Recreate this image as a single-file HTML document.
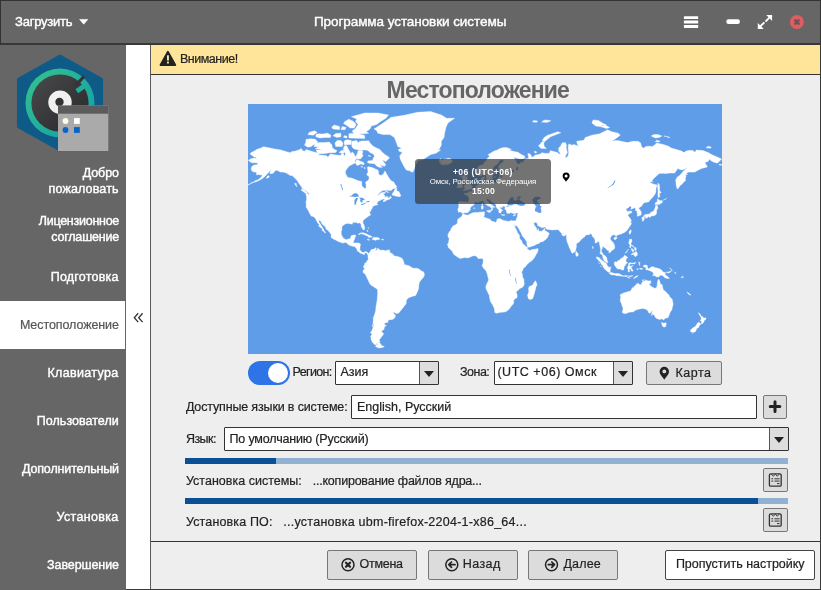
<!DOCTYPE html>
<html lang="ru"><head><meta charset="utf-8"><title>Программа установки системы</title>
<style>
html,body{margin:0;padding:0}
body{width:821px;height:590px;overflow:hidden;position:relative;background:#eee;font-family:'Liberation Sans',sans-serif;font-size:13px;color:#222}
.a{position:absolute;box-sizing:border-box}
.t{position:absolute;white-space:nowrap}
.btn{position:absolute;box-sizing:border-box;background:#dcdcdc;border:1px solid #777;border-radius:2px}
.fld{position:absolute;box-sizing:border-box;background:#fff;border:1px solid #333;border-radius:1px}
.dd{position:absolute;box-sizing:border-box;background:#ddd;border-left:1px solid #555;top:0;right:0;bottom:0;width:19px}
.dd:after{content:"";position:absolute;left:50%;top:50%;margin:-2px 0 0 -5px;border:5px solid transparent;border-top:6px solid #222;border-bottom:0}
.pb{position:absolute;height:6px;background:#91b1d2;left:185px;width:603px}
.pb i{position:absolute;left:0;top:0;bottom:0;background:#095096}

</style></head>
<body>
<!-- title bar -->
<div class="a" style="left:0;top:0;width:821px;height:45px;background:#666;border:1px solid #333;border-bottom:2px solid #383838"></div>
<svg class="a" style="left:78px;top:17px" width="12" height="10" viewBox="0 0 12 10"><path d="M1.6 2.4 L9.8 2.4 L5.7 7.2Z" fill="#fff" stroke="#fff" stroke-width="0.6" stroke-linejoin="round"/></svg>
<svg class="a" style="left:680px;top:12px" width="124" height="22" viewBox="680 12 124 22">
<g fill="#fff"><rect x="683.9" y="16.2" width="14.3" height="2.9" rx="0.6"/><rect x="683.9" y="20.6" width="14.3" height="2.9" rx="0.6"/><rect x="683.9" y="25" width="14.3" height="2.9" rx="0.6"/>
<rect x="726.3" y="19.3" width="13.6" height="4.6" rx="2.2"/>
<path d="M766.2 15 L772.1 15 L772.1 20.9 L769.82 18.62 L766.17 22.27 L764.83 20.93 L768.48 17.28Z M757.8 23 L757.8 28.9 L763.7 28.9 L761.42 26.62 L765.07 22.97 L763.73 21.63 L760.08 25.28Z"/></g>
<circle cx="796.9" cy="22" r="7" fill="#e05c60"/>
<path d="M795.3 20.4 L798.5 23.6 M798.5 20.4 L795.3 23.6" stroke="#6a5557" stroke-width="2.7" stroke-linecap="round"/>
</svg>
<!-- sidebar -->
<div class="a" style="left:0;top:45px;width:126px;height:545px;background:#666"></div>
<div class="a" style="left:0;top:301px;width:125px;height:48px;background:#fff"></div>
<div class="a" style="left:126px;top:45px;width:24px;height:545px;background:#fff"></div>
<!-- logo -->
<svg class="a" style="left:12px;top:50px" width="100" height="106" viewBox="12 50 100 106">
<defs><linearGradient id="gr" x1="0" y1="0" x2="1" y2="1"><stop offset="0" stop-color="#33c48d"/><stop offset="1" stop-color="#159aa8"/></linearGradient>
<linearGradient id="dk" x1="0" y1="0" x2="1" y2="1"><stop offset="0" stop-color="#4a4a4c"/><stop offset="1" stop-color="#28282a"/></linearGradient></defs>
<path d="M60 54.6 L102.8 78.6 L102.8 127.4 L60 151.4 L17.2 127.4 L17.2 78.6Z" fill="#0e5b88" stroke="#0e5b88" stroke-width="5" stroke-linejoin="round" transform="translate(60 103) scale(0.95) translate(-60 -103)"/>
<circle cx="60" cy="103" r="34.5" fill="url(#gr)"/>
<circle cx="60" cy="103" r="28.6" fill="url(#dk)"/>
<path d="M75.4 85.9 L84.1 76.2" stroke="#34343a" stroke-width="3.2" fill="none"/>
<path d="M76.8 91.2 L87.4 83.8" stroke="#1fae9b" stroke-width="4.8" fill="none"/>
<circle cx="60" cy="102.3" r="11.7" fill="#f0f0f0"/>
<circle cx="59.5" cy="102" r="4.2" fill="#333"/>
<rect x="58" y="105.500" width="50.300" height="45.500" fill="#aaa"/>
<rect x="58" y="105.500" width="50.300" height="8.200" fill="#5c5c5c"/>
<circle cx="65.500" cy="121" r="2.900" fill="#fffbe8"/><rect x="74" y="118.100" width="5.800" height="5.800" fill="#fff"/>
<circle cx="65.500" cy="130" r="2.900" fill="#0a64c8"/><rect x="74" y="127.100" width="5.800" height="5.800" fill="#0a64c8"/>
</svg>
<!-- collapse chevrons -->
<svg class="a" style="left:132px;top:311px" width="13" height="13" viewBox="132 311 13 13"><path d="M138.200 313.300 L134.300 317.700 L138.200 322.100 M142.600 313.300 L138.700 317.700 L142.600 322.100" fill="none" stroke="#333" stroke-width="1.300"/></svg>
<!-- content frame -->
<div class="a" style="left:150px;top:45px;width:671px;height:545px;border:1px solid #3a3a3a;border-left-color:#5a5a5a;border-top:0;border-bottom:1.4px solid #3a3a3a;background:#eee"></div>
<div class="a" style="left:126px;top:588.6px;width:30px;height:1.4px;background:#3a3a3a"></div>
<div class="a" style="left:151px;top:45px;width:669px;height:30px;background:#fee599;border-bottom:1px solid #333"></div>
<svg class="a" style="left:158px;top:49px" width="20" height="19" viewBox="158 49 20 19"><path d="M167.900 51.800 L175.300 65 L160.500 65Z" fill="#222" stroke="#222" stroke-width="1.800" stroke-linejoin="round"/><rect x="167" y="55.300" width="1.900" height="5.200" fill="#fee599"/><rect x="167" y="61.600" width="1.900" height="1.900" fill="#fee599"/></svg>
<div class="a" style="left:151px;top:541px;width:669px;height:1px;background:#333"></div>
<!-- map -->
<div class="a" style="left:248px;top:104px;width:474px;height:250px;background:#5f9de8;overflow:hidden"><svg width="474" height="250" viewBox="0 0 474 250" style="position:absolute;left:0;top:0;display:block"><path fill="#fff" stroke="#fff" stroke-width="0.4" stroke-linejoin="round" d="M0.4 56.3L3.1 54.7L6.2 54.0L9.0 54.9L7.6 53.3L6.2 52.9L2.1 50.1L2.9 48.7L6.4 47.1L8.6 45.4L12.4 44.2L15.7 42.7L21.6 43.9L26.9 45.1L32.9 45.9L36.2 47.1L39.5 48.0L42.1 48.7L44.1 47.5L46.7 47.3L50.7 45.9L53.3 44.6L54.6 46.8L57.3 47.3L57.9 45.6L61.2 46.6L66.5 48.2L70.5 48.7L71.8 50.1L69.8 51.0L75.8 51.3L79.1 52.0L79.7 53.6L81.1 51.7L82.4 49.9L86.3 50.8L90.3 51.3L92.9 51.3L93.6 49.4L95.6 50.1L96.2 52.4L97.6 49.7L96.2 48.0L95.2 46.1L95.6 43.7L96.9 41.4L98.9 41.9L100.2 44.9L101.5 47.1L102.8 49.7L104.2 48.0L106.1 49.7L106.8 52.2L108.1 52.2L109.5 49.0L110.1 46.6L114.1 46.6L115.0 48.0L114.1 49.7L115.0 51.7L112.8 54.7L110.8 54.9L108.8 54.5L106.8 56.9L107.5 58.7L105.5 59.7L102.6 61.2L100.9 62.3L98.2 65.8L97.2 68.1L98.0 70.5L99.8 73.6L103.5 74.0L106.1 75.1L110.1 76.8L113.7 77.4L113.8 81.5L115.4 83.6L117.1 84.7L118.2 83.3L118.0 80.0L117.4 78.3L120.7 75.9L121.3 73.0L118.7 70.7L120.0 68.1L119.4 63.3L120.0 62.7L123.3 63.3L125.3 64.0L127.3 65.0L129.9 66.0L130.6 68.1L130.4 70.1L132.6 71.4L135.2 70.5L136.5 67.5L137.2 67.3L139.2 71.0L141.1 74.0L143.1 76.8L145.8 78.1L147.1 80.6L148.8 82.4L147.7 84.2L145.1 84.7L143.1 86.5L139.2 86.3L134.5 86.5L132.6 88.1L130.6 90.0L128.6 92.2L130.6 91.0L133.9 88.6L137.2 88.2L137.4 88.9L135.2 90.1L136.5 91.0L136.8 93.2L138.5 93.7L141.1 94.2L142.5 92.0L143.4 93.7L141.8 95.1L138.5 96.2L135.9 97.9L134.9 97.1L137.2 94.9L135.9 95.1L133.9 95.4L131.9 96.6L129.9 97.5L128.9 99.3L129.1 100.5L129.9 100.3L130.0 100.8L129.1 101.1L128.1 101.1L126.6 101.6L124.6 102.6L124.5 104.0L123.3 105.3L122.7 104.5L123.2 105.9L122.1 108.1L121.6 107.5L121.5 104.8L121.2 106.7L121.6 108.4L122.7 111.0L121.1 111.8L119.4 113.0L117.8 114.2L115.7 115.7L114.9 117.6L115.0 119.1L116.1 121.2L116.7 123.5L116.5 125.5L115.4 125.9L114.3 124.4L113.1 122.2L113.1 120.3L111.4 118.8L109.7 119.3L108.1 118.2L106.1 118.4L104.2 118.5L104.6 120.1L102.8 120.0L100.9 119.4L98.2 119.4L96.9 120.3L94.9 121.5L93.7 123.2L94.0 124.8L93.3 127.5L93.2 129.9L94.0 132.0L95.5 134.3L96.9 135.1L98.2 135.7L100.2 135.1L102.2 134.7L102.8 133.2L103.2 131.8L105.5 131.1L107.5 131.1L107.7 132.0L106.8 133.9L106.4 135.7L105.8 136.7L105.2 138.7L106.1 139.0L108.8 138.9L110.8 139.0L112.5 140.1L112.1 142.2L112.0 144.2L111.7 145.6L112.8 147.0L114.1 148.3L115.4 148.6L117.0 147.8L118.0 147.6L119.6 148.6L120.3 149.7L120.0 150.4L119.0 149.7L118.0 148.5L116.7 149.3L116.3 150.5L115.4 150.6L114.7 149.9L113.0 149.4L112.0 149.0L110.4 147.4L109.2 147.0L109.1 145.6L107.5 143.5L106.7 142.6L104.8 142.3L102.2 141.6L100.5 140.7L98.2 138.6L96.9 138.5L94.9 139.1L92.3 138.3L90.3 137.5L87.7 136.1L85.4 135.0L83.7 133.9L82.9 132.6L83.3 131.1L82.4 128.9L81.7 128.5L79.7 126.1L77.9 124.9L77.8 123.2L76.4 122.0L75.1 121.0L73.8 119.5L72.9 117.3L70.8 116.1L70.9 118.1L72.5 120.3L73.8 122.5L75.1 124.6L76.2 126.8L77.8 128.7L77.1 129.1L75.8 127.5L74.2 126.4L74.2 124.6L72.5 123.5L70.5 122.0L71.5 121.0L70.2 119.5L69.2 118.1L68.2 116.1L67.6 114.8L65.9 112.8L63.2 112.1L61.9 109.8L61.2 108.5L60.6 107.0L58.9 104.3L58.1 102.9L58.3 100.3L57.9 98.7L58.6 95.4L58.6 92.9L57.7 89.6L59.9 90.0L60.6 91.5L60.9 89.8L59.9 88.6L57.9 86.8L54.6 85.1L53.3 82.4L50.7 79.1L49.4 76.8L46.7 74.0L44.1 71.4L42.1 71.4L40.1 70.1L37.7 68.7L34.8 68.1L32.2 68.1L29.6 66.4L26.9 66.4L26.3 68.3L24.3 69.5L21.9 69.7L22.3 67.1L24.3 65.6L22.0 66.4L21.0 68.1L19.6 69.5L18.6 70.5L16.3 73.0L13.7 74.9L11.1 76.5L8.4 77.6L6.7 78.1L4.7 78.7L7.1 76.8L9.7 75.9L12.4 74.0L13.7 72.4L14.4 70.9L12.4 71.0L10.4 70.5L8.4 70.9L8.7 69.1L7.8 68.1L5.8 68.1L3.8 66.8L3.1 64.8L3.8 62.7L5.1 61.4L7.8 60.8L9.7 60.6L9.7 58.9L7.8 58.7L3.8 58.7L2.5 58.0Z M475.8 56.3L478.6 54.7L481.6 54.0L484.4 54.9L483.1 53.3L481.6 52.9L477.5 50.1L478.3 48.7L481.9 47.1L484.0 45.4L487.8 44.2L491.1 42.7L497.1 43.9L502.3 45.1L508.3 45.9L511.6 47.1L514.9 48.0L517.5 48.7L519.5 47.5L522.1 47.3L526.1 45.9L528.7 44.6L530.1 46.8L532.7 47.3L533.4 45.6L536.7 46.6L542.0 48.2L545.9 48.7L547.2 50.1L545.3 51.0L551.2 51.3L554.5 52.0L555.2 53.6L556.5 51.7L557.8 49.9L561.8 50.8L565.7 51.3L568.4 51.3L569.0 49.4L571.0 50.1L571.7 52.4L573.0 49.7L571.7 48.0L570.6 46.1L571.0 43.7L572.3 41.4L574.3 41.9L575.6 44.9L576.9 47.1L578.3 49.7L579.6 48.0L581.6 49.7L582.2 52.2L583.6 52.2L584.9 49.0L585.5 46.6L589.5 46.6L590.4 48.0L589.5 49.7L590.4 51.7L588.2 54.7L586.2 54.9L584.2 54.5L582.2 56.9L582.9 58.7L580.9 59.7L578.0 61.2L576.3 62.3L573.6 65.8L572.6 68.1L573.4 70.5L575.2 73.6L578.9 74.0L581.6 75.1L585.5 76.8L589.1 77.4L589.2 81.5L590.8 83.6L592.5 84.7L593.6 83.3L593.5 80.0L592.8 78.3L596.1 75.9L596.8 73.0L594.1 70.7L595.4 68.1L594.8 63.3L595.4 62.7L598.7 63.3L600.7 64.0L602.7 65.0L605.3 66.0L606.0 68.1L605.9 70.1L608.0 71.4L610.6 70.5L611.9 67.5L612.6 67.3L614.6 71.0L616.6 74.0L618.5 76.8L621.2 78.1L622.5 80.6L624.2 82.4L623.2 84.2L620.5 84.7L618.5 86.5L614.6 86.3L610.0 86.5L608.0 88.1L606.0 90.0L604.0 92.2L606.0 91.0L609.3 88.6L612.6 88.2L612.9 88.9L610.6 90.1L611.9 91.0L612.2 93.2L613.9 93.7L616.6 94.2L617.9 92.0L618.8 93.7L617.2 95.1L613.9 96.2L611.3 97.9L610.4 97.1L612.6 94.9L611.3 95.1L609.3 95.4L607.3 96.6L605.3 97.5L604.3 99.3L604.6 100.5L605.3 100.3L605.4 100.8L604.6 101.1L603.5 101.1L602.0 101.6L600.1 102.6L599.9 104.0L598.7 105.3L598.1 104.5L598.6 105.9L597.6 108.1L597.0 107.5L596.9 104.8L596.6 106.7L597.0 108.4L598.1 111.0L596.5 111.8L594.8 113.0L593.2 114.2L591.1 115.7L590.3 117.6L590.4 119.1L591.5 121.2L592.1 123.5L591.9 125.5L590.8 125.9L589.8 124.4L588.6 122.2L588.6 120.3L586.9 118.8L585.1 119.3L583.6 118.2L581.6 118.4L579.6 118.5L580.0 120.1L578.3 120.0L576.3 119.4L573.6 119.4L572.3 120.3L570.3 121.5L569.2 123.2L569.4 124.8L568.8 127.5L568.6 129.9L569.4 132.0L570.9 134.3L572.3 135.1L573.6 135.7L575.6 135.1L577.6 134.7L578.3 133.2L578.7 131.8L580.9 131.1L582.9 131.1L583.2 132.0L582.2 133.9L581.8 135.7L581.2 136.7L580.6 138.7L581.6 139.0L584.2 138.9L586.2 139.0L587.9 140.1L587.5 142.2L587.4 144.2L587.1 145.6L588.2 147.0L589.5 148.3L590.8 148.6L592.4 147.8L593.5 147.6L595.0 148.6L595.7 149.7L595.4 150.4L594.4 149.7L593.5 148.5L592.1 149.3L591.7 150.5L590.8 150.6L590.2 149.9L588.4 149.4L587.4 149.0L585.8 147.4L584.6 147.0L584.5 145.6L582.9 143.5L582.1 142.6L580.3 142.3L577.6 141.6L575.9 140.7L573.6 138.6L572.3 138.5L570.3 139.1L567.7 138.3L565.7 137.5L563.1 136.1L560.8 135.0L559.1 133.9L558.3 132.6L558.7 131.1L557.8 128.9L557.1 128.5L555.2 126.1L553.3 124.9L553.2 123.2L551.9 122.0L550.5 121.0L549.2 119.5L548.3 117.3L546.2 116.1L546.3 118.1L547.9 120.3L549.2 122.5L550.5 124.6L551.6 126.8L553.2 128.7L552.5 129.1L551.2 127.5L549.6 126.4L549.6 124.6L547.9 123.5L545.9 122.0L547.0 121.0L545.7 119.5L544.6 118.1L543.7 116.1L543.0 114.8L541.3 112.8L538.7 112.1L537.3 109.8L536.7 108.5L536.0 107.0L534.3 104.3L533.5 102.9L533.8 100.3L533.4 98.7L534.0 95.4L534.0 92.9L533.1 89.6L535.3 90.0L536.0 91.5L536.3 89.8L535.3 88.6L533.4 86.8L530.1 85.1L528.7 82.4L526.1 79.1L524.8 76.8L522.1 74.0L519.5 71.4L517.5 71.4L515.5 70.1L513.2 68.7L510.3 68.1L507.6 68.1L505.0 66.4L502.3 66.4L501.7 68.3L499.7 69.5L497.3 69.7L497.7 67.1L499.7 65.6L497.4 66.4L496.4 68.1L495.1 69.5L494.0 70.5L491.8 73.0L489.1 74.9L486.5 76.5L483.8 77.6L482.1 78.1L480.1 78.7L482.5 76.8L485.2 75.9L487.8 74.0L489.1 72.4L489.8 70.9L487.8 71.0L485.8 70.5L483.8 70.9L484.1 69.1L483.2 68.1L481.2 68.1L479.2 66.8L478.6 64.8L479.2 62.7L480.5 61.4L483.2 60.8L485.2 60.6L485.2 58.9L483.2 58.7L479.2 58.7L477.9 58.0Z M126.0 25.0L135.2 19.0L143.1 13.3L156.3 11.3L169.5 8.3L182.7 7.6L193.3 11.0L198.6 14.3L206.5 14.3L199.9 19.0L197.9 23.5L196.6 29.2L196.0 33.4L193.3 37.3L193.3 41.2L191.3 44.9L188.7 45.1L192.6 46.1L188.0 49.2L182.7 50.6L178.8 53.1L174.8 55.8L170.2 56.5L168.2 59.7L166.9 62.9L165.6 67.1L164.3 68.3L161.6 66.8L158.3 66.0L156.3 62.9L154.4 59.3L152.4 55.4L151.7 52.0L154.4 48.5L151.1 47.3L150.4 45.4L153.7 44.2L149.7 42.4L148.4 38.6L146.4 33.4L141.8 30.6L135.2 30.6L129.9 29.2L128.6 26.4Z M141.4 54.0L137.8 57.6L133.2 55.4L132.6 54.2L135.9 58.2L137.8 60.8L136.5 62.3L131.9 60.4L134.5 63.3L131.2 63.3L128.6 61.9L126.6 59.7L121.3 59.3L119.4 58.4L120.0 56.9L124.6 56.5L125.3 54.2L126.6 52.0L125.3 50.1L122.0 48.5L120.0 46.6L118.0 46.1L114.1 46.1L111.4 46.1L108.8 45.4L106.1 44.9L104.2 43.2L103.5 39.9L104.2 37.3L108.8 36.6L110.1 39.1L111.4 37.6L115.4 36.8L119.4 38.6L122.0 39.1L124.6 41.7L127.9 43.7L131.9 45.4L133.9 48.0L137.2 50.8L140.5 52.7Z M69.2 48.0L72.5 49.7L77.1 49.4L81.1 48.7L83.7 48.7L87.7 48.5L89.0 46.6L86.3 45.4L84.4 43.7L83.7 40.4L81.1 38.1L77.1 38.6L71.8 38.6L67.2 39.1L65.9 42.4L70.5 42.7L67.2 44.6L74.5 45.4L67.9 46.1Z M56.6 41.2L59.9 43.2L63.2 42.4L66.5 39.9L69.8 37.9L67.2 35.2L62.6 34.7L57.9 35.5L57.9 37.9Z M67.9 32.8L71.8 33.9L77.1 33.6L82.4 33.4L83.0 31.2L79.7 29.2L74.5 30.1L70.5 29.8L67.9 30.6Z M87.7 42.4L94.3 42.4L94.9 39.1L92.9 36.6L89.0 36.6L87.0 39.1Z M96.2 40.7L102.8 40.4L103.5 36.6L98.9 35.8L96.2 37.1Z M100.9 33.9L116.7 34.4L116.7 31.5L110.1 29.8L104.8 29.2L100.9 29.8Z M89.0 33.4L92.9 32.8L92.9 29.2L87.7 29.5L85.0 31.7Z M120.7 29.2L115.4 29.8L106.1 29.5L104.2 27.0L107.5 24.4L110.1 20.5L107.5 17.4L108.8 14.9L103.5 12.7L116.7 9.0L129.9 9.0L140.5 11.0L137.8 14.3L132.6 17.4L128.6 20.5L123.3 22.0L122.0 25.0L118.0 27.8Z M106.1 24.1L108.1 20.5L105.5 17.4L100.9 15.2L96.9 17.4L95.6 19.6L99.5 22.0L102.2 24.1Z M91.0 48.5L95.6 49.4L96.2 47.5L93.6 46.3Z M108.1 60.4L109.5 61.4L112.8 60.0L115.4 60.8L116.5 59.7L114.7 58.0L111.4 56.9L110.1 55.6L108.1 56.5L107.5 58.7Z M59.9 30.6L65.2 31.2L69.2 28.4L66.5 26.7L61.2 28.4Z M85.0 25.0L91.6 25.5L91.6 22.6L86.3 21.1L83.7 22.9Z M92.9 25.5L96.9 25.8L98.2 23.5L94.3 22.6Z M144.1 91.0L148.4 92.2L152.1 92.7L152.8 91.2L151.7 89.5L151.1 87.7L149.1 87.0L148.4 86.0L149.1 84.0L147.1 85.1L145.8 87.7L144.4 89.5Z M59.4 89.6L57.3 89.1L55.3 87.7L52.9 85.8L54.0 85.2L56.6 86.5L58.6 88.1Z M49.1 82.9L47.4 81.1L46.7 79.3L48.3 79.6L48.4 81.5Z M18.3 74.4L21.2 73.2L21.0 71.6L19.3 72.2Z M137.4 92.5L140.5 93.0L139.8 93.7L137.8 93.2Z M137.2 87.2L140.5 88.1L140.7 88.4L137.8 87.7Z M110.2 130.5L112.1 129.1L114.1 128.7L116.1 128.9L118.0 129.8L120.0 130.8L122.4 131.8L124.4 132.9L123.3 133.3L120.0 133.3L120.4 132.3L118.7 131.8L116.7 130.8L114.3 130.1L113.0 129.6L111.4 130.6Z M124.1 135.4L125.6 133.3L127.7 133.4L129.9 133.6L132.0 135.1L130.6 135.5L128.6 135.7L127.7 136.4L126.2 135.7L124.6 135.8Z M119.0 135.5L120.7 135.3L121.7 136.0L120.4 136.2Z M133.6 135.3L135.7 135.4L135.5 136.0L133.6 136.0Z M119.0 126.8L119.6 125.9L119.9 127.1L119.5 127.8Z M119.9 123.5L120.7 123.9L120.4 124.6Z M140.6 146.0L141.9 145.9L141.8 146.8L140.6 146.8Z M4.7 78.7L2.5 79.8L0.5 80.9L-0.8 81.8L0.5 80.6L2.5 79.4L4.5 78.1Z M480.1 78.7L477.9 79.8L475.9 80.9L474.6 81.8L475.9 80.6L477.9 79.4L479.9 78.1Z M471.0 61.0L474.6 61.4L474.9 60.8L471.3 60.2Z M112.8 62.3L114.7 62.7L114.1 63.6Z M116.1 63.3L117.4 64.0L116.7 64.8Z M120.0 51.3L122.7 52.0L122.0 52.7Z M116.1 37.1L120.7 36.8L122.0 38.6L118.0 39.4Z M95.6 33.4L98.9 33.9L98.9 32.0L96.2 31.7Z M120.0 150.4L120.3 149.7L120.9 148.9L122.4 147.6L122.7 146.3L123.6 145.6L126.0 145.1L127.9 143.7L128.3 144.6L127.5 145.6L127.9 147.0L128.6 145.9L129.5 144.9L129.9 144.0L130.4 144.9L132.2 145.9L132.6 146.3L135.2 146.1L137.2 146.7L140.5 146.0L139.4 146.4L141.8 147.6L142.5 149.0L144.4 149.7L146.4 152.0L149.7 152.5L153.0 153.7L154.4 154.7L155.7 157.8L156.3 159.8L155.7 160.8L158.3 161.2L160.3 161.4L163.6 163.2L163.9 163.9L166.9 164.3L169.5 164.3L171.5 165.5L173.5 167.0L175.7 167.9L176.4 170.2L176.3 171.3L175.5 173.3L173.5 175.4L171.5 178.1L170.9 180.8L170.6 184.3L169.8 187.1L169.1 188.2L168.2 190.6L166.9 192.0L165.3 192.0L162.9 192.9L161.0 193.6L159.0 195.3L158.2 197.0L158.2 199.7L156.3 201.9L154.4 204.4L153.0 206.2L151.8 207.8L150.4 209.2L148.1 209.5L145.8 208.1L145.2 208.9L146.8 210.4L147.5 212.0L146.4 214.3L144.4 215.4L140.5 215.9L140.2 215.5L140.1 218.2L136.5 219.0L136.5 220.6L138.4 221.5L136.5 222.8L135.9 225.6L133.2 227.2L135.2 229.3L135.5 230.3L133.2 233.2L131.2 235.9L132.0 238.2L130.6 238.6L128.6 239.5L128.6 241.0L126.6 240.4L124.6 238.6L123.3 235.9L122.7 232.4L124.0 230.3L122.5 228.4L124.0 226.4L124.9 223.9L126.2 221.5L125.0 219.0L125.3 216.6L125.3 213.5L125.7 212.7L126.6 210.4L127.7 206.6L127.9 203.6L128.2 201.4L128.9 197.8L129.3 194.9L129.4 192.7L129.7 189.2L129.5 185.6L127.9 184.3L125.3 182.6L123.1 181.3L121.7 179.5L120.4 176.7L119.1 174.0L118.0 171.6L116.8 169.7L115.1 168.6L115.0 166.8L116.3 165.1L117.0 163.9L116.3 164.0L115.5 163.4L115.7 161.8L116.7 160.5L116.6 159.4L118.0 158.9L118.3 158.1L119.0 157.0L120.3 155.4L120.0 153.1L120.1 151.4L119.5 150.8Z M131.8 238.8L132.2 239.5L133.9 241.7L136.3 242.6L134.5 243.4L131.9 243.9L129.3 243.6L127.3 242.3L128.6 241.3L129.7 240.4L129.5 239.3Z M124.4 222.8L125.3 222.8L125.4 220.6L124.6 220.3Z M155.3 160.8L157.7 160.8L158.3 161.6L157.0 162.6L155.3 161.8Z M214.6 110.1L215.4 109.9L218.4 110.9L219.7 111.2L221.6 110.2L224.3 109.0L226.3 108.5L229.0 108.5L231.6 108.2L234.2 107.9L235.4 107.8L236.9 108.2L236.2 109.2L236.6 110.5L235.7 112.8L236.9 113.6L239.8 114.5L242.4 115.4L243.1 116.9L245.5 117.6L247.5 118.4L248.8 117.3L248.8 115.5L250.8 114.5L252.7 114.9L254.1 115.8L255.4 116.4L258.0 116.9L260.7 117.5L262.0 116.9L263.3 116.4L265.0 116.9L266.6 117.2L267.5 116.9L268.5 119.5L267.7 122.0L266.6 121.0L265.4 119.0L265.3 119.5L266.6 121.7L267.0 122.9L267.9 124.9L269.2 127.5L269.5 128.9L271.1 130.4L271.5 131.8L271.5 133.7L271.9 135.3L273.2 136.0L274.5 139.3L275.8 140.4L277.2 141.8L278.5 142.9L279.5 143.5L279.3 144.8L279.8 145.3L281.8 146.4L284.4 145.5L287.1 145.2L290.1 144.5L290.0 146.4L289.5 148.3L288.1 150.4L287.1 152.4L285.8 154.4L283.8 156.7L282.2 157.8L280.5 159.1L278.5 161.2L277.2 162.9L275.5 164.1L274.8 165.9L274.1 167.2L273.6 168.8L274.3 169.7L274.5 172.0L274.9 174.0L275.8 175.0L276.0 177.4L276.2 180.2L275.8 181.5L274.9 182.9L272.5 184.3L271.2 185.0L270.2 186.3L268.5 187.5L268.2 188.9L269.0 189.9L269.2 192.7L269.1 193.4L266.6 195.2L265.5 196.2L265.8 197.8L265.3 199.9L263.3 202.0L262.0 204.1L260.0 206.3L258.0 207.5L256.3 208.1L253.4 208.3L251.4 208.4L248.8 209.3L246.8 208.6L246.5 206.6L246.4 204.8L245.2 202.1L244.2 200.1L242.6 197.8L242.2 196.3L241.5 193.4L241.5 191.9L240.2 189.2L238.9 186.4L237.9 184.3L237.9 182.2L238.6 180.2L240.1 177.4L240.6 175.4L239.8 172.4L239.3 169.9L238.6 168.6L238.2 167.2L236.9 165.6L235.3 163.9L234.5 162.2L234.0 161.4L234.9 159.8L235.0 158.5L235.3 156.4L235.0 155.1L234.0 154.3L233.3 154.4L231.6 154.5L230.3 154.7L229.2 153.1L228.0 152.0L226.9 151.8L224.3 152.1L223.0 152.8L222.1 153.1L219.7 154.0L218.4 153.7L217.1 153.5L214.4 154.0L212.5 154.5L210.5 153.7L208.1 152.0L205.9 150.5L204.9 149.0L204.5 147.6L202.8 145.9L201.9 144.9L201.2 144.2L200.3 143.7L200.2 142.3L199.3 140.5L200.6 138.7L200.8 136.7L201.2 134.6L200.6 133.9L199.9 131.9L200.0 130.4L201.2 127.9L202.6 126.4L203.2 124.4L204.9 122.2L205.3 121.7L207.2 121.0L209.2 119.5L209.6 118.1L209.4 116.6L210.1 115.1L212.3 113.4L213.4 112.8L214.2 111.3Z M287.5 176.7L288.7 179.5L289.1 181.5L288.0 182.2L287.7 184.3L286.8 187.8L285.8 191.3L284.7 194.6L282.5 195.6L280.5 194.9L279.5 191.3L280.9 187.8L280.5 185.0L281.1 182.5L283.5 181.8L285.1 180.6L285.8 178.8Z M215.2 109.6L214.0 109.0L212.6 107.9L210.5 108.2L209.8 105.6L210.6 103.2L210.9 101.6L210.2 98.7L211.8 97.5L214.4 97.7L217.1 98.0L219.7 98.0L220.4 97.9L220.8 95.9L220.9 94.4L220.8 93.4L219.5 91.7L218.4 91.0L216.4 90.5L216.0 89.6L218.4 88.9L220.3 89.3L220.1 87.4L220.8 87.9L222.5 87.7L224.3 86.7L224.7 85.2L227.0 84.4L227.9 83.3L228.7 81.5L230.3 80.7L231.6 80.2L233.6 80.4L233.9 79.6L233.7 77.8L233.1 76.6L233.2 74.0L236.4 72.6L236.2 74.9L235.6 76.8L235.3 78.1L235.8 78.9L236.9 79.6L238.9 78.9L240.9 79.6L241.2 79.8L243.5 79.1L246.1 78.1L247.1 78.9L248.5 78.9L248.8 78.0L250.1 76.8L250.1 74.4L251.2 72.8L252.2 72.6L253.4 74.0L254.1 74.0L254.6 71.4L253.4 70.7L253.4 69.7L255.1 69.1L258.0 69.1L259.3 68.7L262.2 68.3L260.0 67.1L255.4 67.7L252.7 68.5L251.4 67.3L250.5 65.0L250.5 62.9L250.8 61.7L252.7 59.7L255.8 57.6L255.8 56.5L254.3 55.8L251.7 56.3L250.5 58.7L249.2 60.2L246.8 61.9L245.3 63.3L245.1 66.6L247.1 68.1L246.8 69.5L244.8 70.9L244.3 73.0L243.5 75.5L241.2 75.9L241.1 77.0L239.5 77.0L239.1 75.5L238.1 72.6L237.2 70.1L236.4 68.3L236.0 70.1L232.9 71.8L231.6 72.0L229.8 70.3L229.1 67.3L229.0 64.4L230.3 62.7L232.3 61.4L235.3 60.6L236.2 58.7L238.2 56.5L239.5 54.2L241.4 52.4L240.2 50.4L242.2 49.4L246.1 47.1L249.4 45.9L252.7 44.2L256.4 43.4L259.3 43.7L263.3 45.4L260.7 46.6L263.3 46.8L265.9 47.5L269.9 48.2L273.2 50.4L276.5 52.0L276.8 54.0L275.2 54.9L272.5 55.1L268.6 54.2L265.3 52.9L266.6 54.7L268.3 57.6L268.3 58.9L270.6 60.0L272.5 60.0L272.5 58.2L275.2 58.4L275.8 56.5L277.8 54.7L280.5 54.7L280.7 55.4L280.5 53.1L279.8 49.7L281.8 49.7L283.1 51.5L283.8 53.3L285.1 53.1L286.8 51.3L292.4 50.1L293.7 48.7L297.6 49.4L301.6 49.2L302.3 46.6L302.9 46.8L307.5 48.0L309.5 48.5L310.8 49.9L312.8 50.1L310.8 47.3L310.6 44.2L312.8 41.7L314.1 38.9L317.4 38.6L318.5 41.2L318.1 43.7L319.4 48.5L317.4 52.0L317.4 54.2L320.1 52.0L320.7 48.5L320.1 43.7L320.7 39.9L324.1 41.2L325.4 40.4L328.0 41.2L330.7 42.4L332.0 44.9L329.3 39.9L328.7 37.3L335.9 36.3L337.3 33.4L343.9 31.2L351.8 29.8L359.7 25.8L363.7 27.8L370.3 29.2L372.3 31.2L367.6 34.7L363.7 37.3L367.6 36.6L371.6 36.8L372.9 37.3L379.5 38.6L384.8 37.3L390.1 37.3L392.7 39.1L393.4 42.4L395.4 44.2L398.0 42.4L400.6 42.2L404.6 42.4L407.2 40.4L408.6 39.1L415.2 40.4L420.5 42.2L423.1 43.9L433.7 47.1L435.6 48.5L438.9 46.8L444.2 46.3L447.5 48.5L446.9 49.0L448.2 46.1L454.8 46.6L460.1 48.5L464.0 50.8L469.3 53.1L473.5 55.1L472.0 56.5L470.0 58.7L468.7 59.1L465.4 58.0L462.7 56.5L461.4 54.9L460.1 57.6L456.8 58.2L458.8 61.9L459.4 62.9L453.5 64.4L449.5 66.4L446.9 68.1L441.6 68.1L439.6 68.3L437.6 71.0L438.0 72.4L437.0 75.3L438.0 75.9L436.0 77.8L433.7 80.6L431.9 81.5L431.0 83.6L429.3 85.1L428.4 82.4L427.9 78.7L427.7 75.9L429.3 73.0L431.7 71.4L433.7 69.1L435.6 67.1L438.3 64.4L439.6 62.9L437.0 65.0L433.7 66.0L429.7 64.6L427.1 68.5L426.4 69.1L421.8 69.1L417.8 69.5L414.5 69.3L411.2 69.5L407.9 72.4L405.3 74.9L403.3 77.8L401.3 78.3L403.9 79.6L405.3 80.0L407.2 80.6L409.0 81.1L408.6 82.4L407.9 85.1L407.9 87.7L407.2 89.8L405.3 92.4L402.6 95.4L400.6 97.9L396.7 98.5L395.0 99.8L393.8 101.9L391.4 103.5L390.7 104.3L392.1 105.9L393.3 108.2L393.0 111.0L390.7 111.9L389.2 112.2L389.4 110.1L389.0 108.2L389.6 107.5L387.7 106.7L387.4 104.6L386.6 103.7L382.8 105.4L383.5 103.1L382.2 102.1L380.2 103.8L377.9 105.1L378.9 106.7L379.5 107.8L381.5 107.1L384.1 107.6L383.9 108.5L381.2 109.8L379.8 111.3L381.5 113.6L383.2 116.0L383.3 117.3L382.2 118.1L383.5 119.0L382.8 121.0L381.5 122.8L380.3 124.6L378.9 126.5L376.9 128.2L374.2 129.4L373.2 129.9L370.9 130.6L369.0 131.2L368.0 132.7L367.4 131.2L365.7 130.8L364.3 131.3L363.3 132.2L362.1 134.6L363.0 136.2L364.3 137.8L365.4 138.7L366.6 141.5L366.7 143.5L366.3 144.9L364.3 146.3L363.3 147.0L363.0 147.8L360.8 148.9L361.0 147.0L360.4 146.4L359.0 146.1L358.4 145.2L357.7 144.2L355.7 143.3L355.1 142.2L354.4 142.5L354.3 144.2L353.4 146.3L353.5 147.9L354.7 149.0L355.1 150.8L356.4 151.3L357.5 152.1L358.9 154.0L358.9 155.8L360.0 158.5L359.4 158.7L358.9 158.6L357.3 157.5L356.1 156.4L355.2 154.8L354.8 153.1L354.7 151.7L353.8 150.8L352.6 149.7L352.2 149.9L352.2 148.3L352.6 146.3L352.4 144.2L351.8 141.5L351.4 139.4L351.1 138.0L350.2 137.4L349.1 138.3L348.2 139.0L346.9 138.7L347.2 136.7L346.5 134.6L345.2 133.2L344.3 131.9L343.6 129.9L342.5 129.5L341.9 130.4L339.9 130.8L338.6 130.9L337.3 131.2L337.0 132.2L336.3 133.3L334.6 134.1L333.3 135.5L332.4 136.4L331.1 137.9L329.6 138.9L328.3 139.7L328.4 142.7L327.9 144.9L327.7 146.6L326.7 147.9L325.6 148.5L324.7 149.5L323.4 148.3L323.0 147.0L321.8 144.5L321.1 143.0L320.4 140.8L319.8 139.4L319.0 137.4L318.5 134.6L318.4 132.5L318.4 131.3L318.1 130.1L317.4 131.5L316.1 132.0L314.8 131.8L313.5 129.9L315.1 129.1L313.5 129.2L312.4 127.9L310.8 126.4L310.2 125.5L307.5 125.8L304.2 125.9L302.3 125.7L300.3 125.5L298.0 124.9L297.6 123.2L296.7 123.1L295.0 123.6L293.7 123.8L291.7 122.5L289.7 121.7L289.5 120.3L288.4 118.5L287.1 118.2L285.8 119.1L286.0 120.3L286.7 121.7L287.7 122.9L288.5 123.9L288.7 125.4L289.5 126.4L290.4 124.6L290.5 126.7L291.7 127.2L293.7 127.2L295.4 125.7L296.7 124.2L296.8 126.4L299.6 128.1L301.3 129.6L300.0 132.5L298.7 134.6L297.0 136.0L295.0 137.4L292.4 138.0L291.3 139.3L288.4 140.3L286.4 141.5L283.8 142.3L281.8 143.1L279.8 143.3L279.4 142.2L278.9 140.1L278.8 138.0L277.6 136.0L276.2 133.9L274.5 132.2L274.0 131.1L273.2 128.9L271.9 127.1L271.0 124.9L269.2 122.5L268.3 121.6L268.6 119.5L267.7 122.0L265.4 119.0L265.0 116.9L267.5 116.9L268.6 114.6L269.2 113.0L269.6 110.5L270.2 108.9L268.6 108.9L267.3 109.5L265.3 109.6L262.8 108.5L261.3 109.5L259.3 108.7L258.4 108.2L258.3 105.9L257.8 106.1L257.0 104.6L257.0 103.5L258.7 103.1L260.7 102.9L260.7 101.9L262.0 101.6L264.0 101.6L265.9 100.3L268.6 100.3L270.6 101.5L272.5 101.9L275.2 101.9L277.2 101.0L277.2 99.5L276.5 98.7L274.8 97.7L272.5 96.4L271.6 95.4L271.2 94.9L272.5 93.7L272.9 92.4L273.9 91.7L271.9 92.0L270.6 92.5L268.6 93.4L268.6 94.6L270.6 94.9L269.1 95.4L267.5 96.4L266.6 96.2L265.3 94.7L266.7 93.6L264.6 93.2L263.0 92.9L261.6 94.9L260.3 97.1L259.3 98.4L258.7 99.5L259.5 101.0L260.7 101.6L259.3 101.9L258.0 102.6L257.0 103.4L256.7 102.6L256.6 102.3L254.7 102.1L254.5 103.4L253.4 103.5L252.6 102.7L252.2 103.8L252.7 104.8L253.4 105.9L254.1 106.4L253.7 106.8L254.1 107.1L253.0 107.5L253.0 109.0L252.1 109.0L251.0 108.5L250.5 107.0L251.0 106.4L252.7 106.7L251.0 106.1L250.1 105.4L249.4 104.6L248.8 103.8L248.0 102.7L248.1 101.1L247.5 100.0L246.1 99.2L244.0 97.9L242.4 96.7L241.5 95.1L240.6 95.7L240.3 94.6L240.6 94.2L238.6 94.7L238.7 96.2L239.0 97.1L240.2 97.7L241.1 99.7L243.6 100.5L243.5 101.3L244.8 101.8L246.1 102.6L246.8 103.4L246.7 103.8L245.1 102.9L244.3 104.0L244.9 105.1L244.2 106.2L243.5 106.8L243.0 106.7L243.2 105.4L243.8 104.6L243.0 103.5L241.9 102.6L241.1 102.3L239.5 101.6L238.5 100.8L236.9 99.7L236.2 98.7L236.0 97.9L235.3 96.9L234.1 96.4L232.9 97.2L232.0 97.5L230.3 98.5L229.4 98.2L227.6 97.9L226.5 98.5L226.5 99.7L225.3 101.3L223.4 102.4L222.0 104.3L222.6 105.6L221.7 106.2L221.2 107.3L219.6 108.7L216.6 108.7Z M214.8 86.7L217.7 86.3L221.0 85.6L224.2 84.7L223.4 84.2L224.6 82.0L222.8 81.5L222.5 80.4L220.8 78.5L220.3 76.8L218.7 75.9L219.7 72.8L217.1 72.8L218.3 70.9L215.8 70.9L214.2 73.0L215.1 75.9L216.0 76.6L215.6 78.1L217.9 78.0L218.4 80.0L218.3 80.9L216.4 80.9L216.8 82.4L215.5 83.6L218.0 84.4L216.7 85.1Z M214.4 82.9L211.8 84.0L208.9 83.6L209.8 81.1L209.2 79.3L211.4 78.7L211.8 77.4L214.2 77.4L215.0 78.7L214.2 80.6Z M192.4 60.2L196.0 60.8L199.9 60.4L203.2 58.9L204.4 56.9L202.8 54.9L200.6 54.2L197.9 55.1L195.3 55.4L194.0 56.5L192.6 54.5L190.7 56.3L193.3 57.6L190.7 57.8L193.3 59.1Z M284.4 17.7L288.4 18.4L289.7 17.1L285.8 16.5Z M293.7 18.1L299.0 18.4L302.9 16.8L297.6 15.9L295.0 16.8Z M290.4 41.7L293.0 44.4L296.3 44.4L298.3 44.6L296.3 42.4L295.7 39.9L296.3 37.9L293.7 37.9L292.4 39.9Z M294.3 37.3L297.0 37.6L299.0 35.5L302.9 32.6L308.2 30.6L312.8 28.7L309.5 27.8L304.2 29.8L299.6 31.2L296.3 33.4L295.0 35.2Z M286.1 47.8L287.7 49.2L288.8 48.0L287.3 47.3Z M347.8 22.0L351.8 22.6L355.1 21.1L358.4 21.1L354.4 19.0L350.5 16.5L345.2 15.9L343.9 19.0Z M352.4 22.6L358.4 24.4L361.7 23.5L357.1 21.1Z M403.3 32.0L407.2 33.9L411.2 33.4L413.9 32.0L409.9 30.6L405.9 30.6Z M415.8 32.0L421.1 33.1L421.8 33.9L417.8 32.3Z M407.2 37.6L411.2 38.1L411.9 37.1L408.6 36.3Z M458.1 43.7L462.1 44.2L463.4 43.2L460.1 42.2Z M409.9 79.1L411.2 80.6L411.6 83.3L411.6 86.8L413.2 88.6L411.2 89.5L411.9 92.4L410.6 93.7L409.9 92.0L410.0 88.6L409.9 85.1L409.5 82.4L409.9 80.6Z M407.2 101.1L408.8 100.6L411.5 100.3L414.5 98.2L414.1 96.6L411.9 96.7L409.6 94.7L409.2 97.9L407.6 98.4L407.2 99.8Z M409.2 101.3L409.9 104.3L408.6 106.2L408.6 108.2L408.3 110.2L407.0 111.3L405.7 111.8L403.3 111.9L403.0 112.4L401.7 113.6L400.6 112.4L398.0 112.4L395.4 112.8L395.2 112.2L397.3 110.5L400.0 110.2L402.0 109.8L403.0 107.9L403.9 108.2L405.9 106.7L407.2 103.5L407.5 101.9Z M397.1 113.6L398.3 114.3L399.7 113.6L400.1 112.5L398.7 112.4L397.6 112.8Z M394.0 113.6L395.4 113.0L396.6 113.9L396.0 115.8L395.1 117.3L394.3 116.9L394.4 115.1L393.6 114.3Z M382.8 125.8L383.3 126.8L382.7 128.9L381.9 130.4L381.0 128.9L381.4 127.1Z M365.9 134.1L367.0 133.2L368.8 133.2L369.0 133.9L368.0 135.3L367.0 135.7L365.9 135.1Z M381.5 135.3L383.7 135.3L383.9 137.4L383.0 139.0L383.0 141.1L384.8 141.5L386.1 142.9L385.5 143.3L384.1 141.8L382.2 141.9L381.8 140.8L381.1 140.1L380.7 138.5L381.4 136.9Z M383.5 151.0L383.7 149.7L385.5 148.9L386.8 148.6L388.1 147.2L389.3 149.0L389.3 151.0L388.8 152.0L388.1 151.0L387.8 152.8L386.4 152.0L385.9 150.4L384.8 150.4Z M386.5 143.5L387.8 143.5L388.4 145.3L387.4 146.7L387.2 145.9L386.6 144.9Z M384.0 146.3L385.2 145.7L385.2 147.9L384.3 147.6L384.7 147.0Z M383.5 144.4L384.8 144.9L384.3 146.1L383.5 146.3Z M381.4 142.3L382.6 142.3L382.8 143.5L382.2 144.0Z M377.1 149.1L378.2 147.9L379.5 146.4L380.4 145.1L379.9 146.3L378.9 147.9L377.7 148.9Z M385.3 147.0L386.1 145.3L386.1 146.6L385.6 147.5Z M366.3 158.5L367.2 157.8L369.2 158.2L369.5 156.8L371.6 156.2L372.9 154.4L374.9 153.7L376.6 151.2L377.8 152.0L379.8 153.5L378.5 154.7L377.8 156.4L378.2 157.5L379.5 159.1L378.1 159.4L377.5 161.2L376.2 162.5L376.0 164.5L375.6 165.9L373.8 166.0L372.3 164.9L370.3 165.1L369.0 164.5L367.9 162.9L366.6 161.2L366.3 159.8Z M348.2 152.9L351.1 153.5L352.7 155.4L354.8 157.1L356.4 158.1L358.4 159.4L359.3 161.6L360.4 162.9L362.3 164.5L362.1 168.3L360.4 168.3L357.7 166.1L355.7 163.9L354.8 161.7L353.1 159.8L352.4 158.1L350.5 156.4L348.5 154.1Z M361.3 169.7L362.3 168.4L363.7 168.6L365.7 169.3L368.3 169.8L369.0 169.3L371.2 169.8L373.6 171.0L373.4 172.2L371.6 171.7L369.0 171.7L366.3 170.9L364.3 170.9L362.7 170.5Z M373.6 171.6L375.2 171.6L374.5 172.4Z M375.6 171.7L376.5 171.7L376.2 172.5L375.4 172.4Z M376.6 171.8L378.2 171.6L379.8 172.0L378.9 172.5L376.9 172.6Z M380.6 171.8L382.2 172.0L384.7 171.6L384.5 172.1L382.8 172.5L380.8 172.4Z M379.5 173.2L381.2 173.6L381.9 174.3L380.2 173.9Z M385.5 174.4L386.8 172.9L388.1 172.1L390.3 171.8L389.4 172.6L387.4 173.7L386.1 174.4Z M380.6 159.4L381.9 158.7L384.1 159.1L386.8 158.7L387.7 158.3L386.8 159.9L384.8 159.8L382.2 159.8L381.1 161.6L382.2 162.2L385.2 161.6L384.5 162.1L383.1 163.2L384.1 165.2L385.1 166.5L384.1 167.6L383.2 166.5L382.2 164.5L381.5 164.5L381.4 167.9L380.2 167.9L380.2 165.2L379.4 164.3L380.2 161.8L380.6 160.5Z M390.7 157.8L391.4 158.5L392.3 158.5L391.4 159.8L391.8 161.6L391.1 160.9L390.9 159.1Z M391.4 164.5L393.4 164.3L395.1 165.1L393.8 165.2L392.1 165.2Z M388.8 164.8L390.1 164.7L390.3 165.5L389.0 165.6Z M395.4 161.6L397.3 161.0L399.3 161.6L399.6 163.9L400.6 164.9L402.6 163.4L404.6 162.6L407.2 163.7L409.2 164.1L411.9 165.1L413.9 166.3L414.9 167.9L417.2 168.6L417.6 169.7L416.5 169.7L417.8 171.3L419.8 172.6L421.5 174.4L419.8 174.4L417.2 174.0L415.2 172.0L413.2 170.9L411.9 171.7L410.6 172.9L408.6 172.9L406.6 171.6L404.6 171.8L405.7 169.9L404.6 167.9L402.0 166.7L399.3 165.7L398.0 165.9L397.7 164.5L399.1 163.6L397.1 163.4L395.4 162.4Z M418.2 168.2L420.5 167.9L422.4 167.2L423.5 166.1L423.1 167.2L421.8 168.6L419.8 169.0Z M421.5 164.0L423.1 164.9L424.4 166.5L424.0 165.9L422.4 164.4Z M426.7 167.9L428.1 169.3L427.7 169.8L426.8 168.8Z M433.0 173.0L434.7 173.7L434.1 173.9L433.1 173.5Z M434.6 171.8L435.4 173.3L435.0 173.3L434.5 172.2Z M327.9 147.4L329.1 148.3L330.4 150.4L330.0 151.8L328.7 152.4L327.9 151.3L327.7 149.4Z M372.3 190.6L373.2 190.3L375.6 188.9L377.5 188.6L379.5 187.8L382.2 187.2L383.7 185.3L384.1 183.6L385.6 184.2L385.9 182.6L387.4 181.5L388.8 179.7L390.7 179.5L391.8 180.7L393.4 180.7L393.6 179.1L394.8 177.4L396.0 177.0L397.5 177.0L397.3 175.8L399.3 176.7L401.0 177.0L402.9 176.7L402.9 178.4L402.0 178.8L401.3 180.6L402.6 181.9L404.6 183.2L406.6 184.3L408.3 184.0L409.2 181.5L409.4 178.8L409.8 176.7L410.6 175.1L411.9 177.4L412.3 179.9L414.2 180.7L414.5 182.9L415.4 186.1L417.8 187.8L419.1 189.2L421.1 191.3L421.8 193.0L424.2 195.3L424.7 197.8L425.2 200.2L424.4 202.9L423.8 205.9L422.2 208.0L421.5 210.0L420.5 212.7L419.8 213.8L417.2 214.3L415.6 215.9L413.9 214.8L411.9 215.5L409.2 214.8L407.2 213.2L406.6 211.2L404.9 210.6L405.3 209.3L404.3 210.0L403.3 210.0L404.3 207.4L404.3 206.0L403.3 207.7L402.0 209.3L400.9 208.9L399.6 206.3L397.3 205.1L395.4 204.4L392.7 204.7L389.4 205.6L386.8 206.6L385.5 208.0L382.8 208.0L380.2 208.6L378.2 209.6L376.2 209.6L374.2 208.6L374.6 206.6L375.2 204.8L374.2 202.1L373.6 199.9L372.3 197.0L372.3 194.9L372.9 193.4L372.3 192.0Z M413.5 218.5L415.8 219.2L418.1 218.7L418.2 220.6L417.6 222.6L415.8 223.2L414.5 221.9L413.9 220.3Z M402.8 210.9L404.6 210.9L403.9 211.3Z M394.3 175.9L396.0 175.8L395.4 176.6L394.4 176.5Z M402.5 179.3L403.2 179.3L402.9 179.9Z M450.4 208.7L452.2 210.1L453.2 212.4L454.5 212.3L454.8 213.7L456.8 214.1L458.1 213.8L457.4 215.9L456.1 216.6L455.8 218.2L453.9 220.0L453.2 219.5L453.7 217.8L452.2 216.5L453.1 215.5L453.1 213.5L451.5 210.9Z M450.4 218.2L452.5 219.3L452.4 220.6L450.8 222.4L450.6 223.7L448.6 224.4L447.9 227.1L446.2 228.3L444.6 228.3L442.2 227.2L442.9 225.6L444.9 223.9L447.5 222.3L448.8 220.3L449.8 218.7Z M443.8 228.8L444.5 228.8L444.2 229.4Z M438.9 187.9L440.9 189.2L442.9 191.0L442.2 191.2L440.3 189.9Z M265.0 111.3L265.9 110.9L267.9 110.4L267.3 111.3L265.9 111.9Z M253.4 110.5L255.4 110.7L257.1 111.0L255.4 111.5L253.5 111.0Z M238.7 106.7L240.2 106.4L243.0 106.2L242.3 108.2L241.2 108.4L238.9 107.3Z M233.2 102.1L234.5 101.6L235.3 102.7L235.0 104.8L233.6 105.3L233.5 103.5Z M233.7 99.5L234.8 98.7L234.9 100.3L234.5 101.3L233.9 100.5Z M225.5 104.2L226.5 103.7L226.9 104.2L226.3 104.6Z M253.0 105.3L254.2 105.7L254.7 106.7L253.8 105.9Z M259.1 109.3L259.6 109.2L259.3 109.9Z M256.6 104.8L257.4 104.6L257.1 105.1Z M246.3 73.4L247.2 72.2L247.5 73.0L246.5 74.0Z M244.0 75.3L244.8 73.4L244.7 74.4Z M237.2 77.2L238.5 77.8L239.0 76.5L238.6 75.7L237.3 76.3Z M235.3 77.2L236.5 77.6L236.5 76.8L235.6 76.6Z M251.3 71.4L252.7 71.4L252.7 70.9L251.4 70.9Z M251.7 70.5L252.7 70.5L252.3 69.9Z M212.9 72.4L214.0 71.2L213.8 72.2L212.7 73.6Z M415.2 96.2L417.2 95.1L418.5 94.6L416.5 95.4Z M361.3 162.9L363.0 163.2L363.0 164.5L362.1 163.9Z M350.7 158.6L351.5 159.5L351.1 159.5Z M352.7 161.8L353.4 162.8L353.0 162.8Z M344.8 142.2L345.2 143.5L344.9 144.8L344.5 143.5Z M438.3 69.9L439.6 70.5L438.9 71.0Z M403.7 77.8L404.9 77.6L404.3 78.3Z"/><path fill="#5f9de8" d="M100.9 92.5L103.5 91.5L105.5 89.8L108.1 89.1L110.4 90.7L110.8 92.7L108.8 92.7L106.8 92.9L104.2 92.4Z M106.4 100.8L108.1 100.5L108.4 97.9L109.5 95.4L110.1 94.1L108.1 94.1L106.4 96.2L106.5 98.7Z M110.8 93.7L114.7 93.7L116.7 95.4L116.5 96.2L114.7 95.9L114.5 98.2L113.4 98.7L112.1 97.1L112.4 95.1Z M112.2 100.8L114.1 101.1L116.7 100.0L118.2 99.0L116.1 99.3L113.4 100.2Z M117.0 98.2L120.0 98.2L121.7 97.7L121.3 96.7L119.4 97.2Z M92.3 80.0L94.3 86.1L95.2 85.8L94.0 82.7L93.2 79.8Z M261.1 165.1L261.7 166.5L261.6 168.6L263.0 171.3L263.6 172.2L262.6 171.6L261.2 169.0L260.9 166.5Z M267.3 173.3L268.1 175.4L268.3 178.1L268.8 179.9L268.1 179.5L267.5 176.7L267.1 174.7Z M285.1 94.4L287.1 92.9L289.7 92.4L292.4 93.2L292.4 95.1L290.1 95.4L289.7 96.2L288.8 96.6L289.7 98.4L291.7 99.5L292.1 100.8L292.1 101.9L293.7 102.3L292.6 104.3L293.4 106.7L293.4 108.4L291.0 108.9L288.8 107.8L287.1 107.3L286.9 106.1L287.6 103.2L288.8 103.1L287.7 101.9L286.4 100.3L285.1 98.7L285.1 97.4L284.2 96.2Z M359.3 84.2L361.0 83.6L363.7 81.8L365.7 80.6L367.0 77.8L367.4 76.3L366.3 76.8L365.0 79.6L363.0 81.5L360.4 83.3Z M263.2 68.1L264.0 66.2L265.3 65.6L265.9 67.1L265.3 67.9L264.0 68.3Z M267.9 66.0L268.8 62.9L269.9 62.9L270.3 65.4L269.2 66.2Z"/></svg></div>
<div class="a" style="left:415.2px;top:158.7px;width:135.6px;height:45px;border-radius:3.5px;background:rgba(52,52,52,0.69)"></div>
<svg class="a" style="left:561px;top:171px" width="10" height="12" viewBox="561 171 10 12"><path d="M566 181.800 C564.800 179.800 562.600 178.300 562.600 176.100 A3.500 3.500 0 0 1 569.600 176.100 C569.600 178.300 567.200 179.800 566 181.800Z" fill="#000"/><circle cx="566.100" cy="176" r="1.500" fill="#fff"/></svg>
<!-- toggle -->
<div class="a" style="left:248px;top:361px;width:42px;height:24px;border-radius:12px;background:#2f74e6"></div>
<div class="a" style="left:267.800px;top:362.700px;width:20.600px;height:20.600px;border-radius:11px;background:#fff"></div>
<!-- region combo -->
<div class="fld" style="left:335px;top:361px;width:104px;height:24px"><div class="dd"></div></div>
<div class="fld" style="left:494px;top:361px;width:139px;height:24px"><div class="dd"></div></div>
<div class="btn" style="left:646px;top:361px;width:76px;height:24px"></div>
<svg class="a" style="left:658px;top:365px" width="13" height="16" viewBox="658 365 13 16"><path d="M664.300 379.800 C662.800 376.800 659.600 374.600 659.600 371.500 A4.700 4.700 0 0 1 669 371.500 C669 374.600 665.800 376.800 664.300 379.800Z" fill="#222"/><circle cx="664.300" cy="371.400" r="1.900" fill="#ddd"/></svg>
<div class="fld" style="left:351px;top:395px;width:406px;height:24px"></div>
<div class="btn" style="left:763px;top:395px;width:24px;height:24px"></div>
<svg class="a" style="left:767px;top:399px" width="16" height="16" viewBox="767 399 16 16"><path d="M775 401.8 V411.4 M770.2 406.6 H779.8" stroke="#222" stroke-width="3" stroke-linecap="round"/></svg>
<div class="fld" style="left:224px;top:427px;width:565px;height:24px"><div class="dd"></div></div>
<div class="pb" style="top:458px"><i style="width:91px"></i></div>
<div class="pb" style="top:498px"><i style="width:573px"></i></div>
<div class="btn" style="left:763px;top:468px;width:25px;height:24px"></div>
<div class="btn" style="left:763px;top:508px;width:25px;height:24px"></div>
<svg class="a" style="left:767px;top:471px" width="17" height="18" viewBox="767 471 17 18"><g fill="none" stroke="#333"><rect x="769.400" y="473.800" width="11.800" height="12.400" rx="1.300" stroke-width="1.300"/><path d="M771.4 474.2 L773.3 476.3 L775.3 474.2 L777.3 476.3 L779.2 474.2" stroke-width="0.9"/><path d="M771.300 478.800 H773.200 M774.400 478.800 H779.600 M771.300 481.100 H773.200 M774.400 481.100 H779.600 M777 483.600 H779.600" stroke-width="1"/></g></svg>
<svg class="a" style="left:767px;top:511px" width="17" height="18" viewBox="767 471 17 18"><g fill="none" stroke="#333"><rect x="769.400" y="473.800" width="11.800" height="12.400" rx="1.300" stroke-width="1.300"/><path d="M771.4 474.2 L773.3 476.3 L775.3 474.2 L777.3 476.3 L779.2 474.2" stroke-width="0.9"/><path d="M771.300 478.800 H773.200 M774.400 478.800 H779.600 M771.300 481.100 H773.200 M774.400 481.100 H779.600 M777 483.600 H779.600" stroke-width="1"/></g></svg>
<div class="btn" style="left:327px;top:550px;width:90px;height:30px"></div>
<div class="btn" style="left:428px;top:550px;width:90px;height:30px"></div>
<div class="btn" style="left:528px;top:550px;width:90px;height:30px"></div>
<svg class="a" style="left:340px;top:557px" width="220" height="16" viewBox="340 557 220 16"><g fill="none" stroke="#222" stroke-width="1.500"><circle cx="348" cy="564.700" r="6"/><circle cx="451.800" cy="564.700" r="6"/><circle cx="551.500" cy="564.700" r="6"/></g>
<path d="M346 562.700 L350 566.700 M350 562.700 L346 566.700" stroke="#222" stroke-width="2.200" stroke-linecap="round"/>
<path d="M455 564.700 H449.500 M451.500 562 L448.800 564.700 L451.500 567.400" stroke="#222" stroke-width="1.700" fill="none" stroke-linecap="round" stroke-linejoin="round"/>
<path d="M548.300 564.700 H553.800 M551.800 562 L554.500 564.700 L551.800 567.400" stroke="#222" stroke-width="1.700" fill="none" stroke-linecap="round" stroke-linejoin="round"/>
</svg>
<div class="btn" style="left:665px;top:550px;width:150px;height:30px;background:#fff;border-color:#444"></div>
<div id="txt" style="position:absolute;left:0;top:0;width:821px;height:590px;will-change:transform">
<div class="t" style="top:14.40px;font-size:13px;line-height:16px;color:#fff;letter-spacing:-0.229px;left:15.10px;-webkit-text-stroke:0.4px #fff;">Загрузить</div>
<div class="t" style="top:14.22px;font-size:13.5px;line-height:16px;color:#fff;letter-spacing:-0.070px;left:313.90px;-webkit-text-stroke:0.4px #fff;">Программа установки системы</div>
<div class="t" style="top:52.07px;font-size:12.5px;line-height:15px;color:#222;letter-spacing:-0.488px;left:180.00px;-webkit-text-stroke:0.2px #222;">Внимание!</div>
<div class="t" style="top:75.83px;font-size:23px;line-height:28px;color:#666;letter-spacing:-0.871px;font-weight:bold;left:386.60px;">Местоположение</div>
<div class="t" style="top:166.52px;font-size:8.6px;line-height:10px;color:#fff;letter-spacing:0.422px;font-weight:bold;left:452.90px;">+06 (UTC+06)</div>
<div class="t" style="top:176.90px;font-size:7.8px;line-height:9px;color:#fff;letter-spacing:-0.041px;left:429.70px;">Омск, Российская Федерация</div>
<div class="t" style="top:186.22px;font-size:8.6px;line-height:10px;color:#fff;letter-spacing:0.163px;font-weight:bold;left:472.10px;">15:00</div>
<div class="t" style="top:165.57px;font-size:12.5px;line-height:15px;color:#fff;letter-spacing:-0.085px;right:702.12px;-webkit-text-stroke:0.4px #fff;">Добро</div>
<div class="t" style="top:181.57px;font-size:12.5px;line-height:15px;color:#fff;letter-spacing:0.140px;right:702.34px;-webkit-text-stroke:0.4px #fff;">пожаловать</div>
<div class="t" style="top:213.57px;font-size:12.5px;line-height:15px;color:#fff;letter-spacing:-0.261px;right:701.94px;-webkit-text-stroke:0.4px #fff;">Лицензионное</div>
<div class="t" style="top:229.57px;font-size:12.5px;line-height:15px;color:#fff;letter-spacing:-0.190px;right:702.01px;-webkit-text-stroke:0.4px #fff;">соглашение</div>
<div class="t" style="top:269.57px;font-size:12.5px;line-height:15px;color:#fff;letter-spacing:0.200px;right:702.40px;-webkit-text-stroke:0.4px #fff;">Подготовка</div>
<div class="t" style="top:317.57px;font-size:12.5px;line-height:15px;color:#555;letter-spacing:-0.081px;right:702.12px;-webkit-text-stroke:0.2px #555;">Местоположение</div>
<div class="t" style="top:365.57px;font-size:12.5px;line-height:15px;color:#fff;letter-spacing:0.328px;right:702.53px;-webkit-text-stroke:0.4px #fff;">Клавиатура</div>
<div class="t" style="top:413.57px;font-size:12.5px;line-height:15px;color:#fff;letter-spacing:0.034px;right:702.23px;-webkit-text-stroke:0.4px #fff;">Пользователи</div>
<div class="t" style="top:461.57px;font-size:12.5px;line-height:15px;color:#fff;letter-spacing:-0.142px;right:702.06px;-webkit-text-stroke:0.4px #fff;">Дополнительный</div>
<div class="t" style="top:509.57px;font-size:12.5px;line-height:15px;color:#fff;letter-spacing:0.323px;right:702.52px;-webkit-text-stroke:0.4px #fff;">Установка</div>
<div class="t" style="top:557.57px;font-size:12.5px;line-height:15px;color:#fff;letter-spacing:-0.093px;right:702.11px;-webkit-text-stroke:0.4px #fff;">Завершение</div>
<div class="t" style="top:365.37px;font-size:12.5px;line-height:15px;color:#222;letter-spacing:-0.632px;left:292.50px;-webkit-text-stroke:0.2px #222;">Регион:</div>
<div class="t" style="top:365.37px;font-size:12.5px;line-height:15px;color:#222;letter-spacing:0.000px;left:340.50px;-webkit-text-stroke:0.2px #222;">Азия</div>
<div class="t" style="top:365.37px;font-size:12.5px;line-height:15px;color:#222;letter-spacing:-0.509px;left:460.00px;-webkit-text-stroke:0.2px #222;">Зона:</div>
<div class="t" style="top:365.37px;font-size:12.5px;line-height:15px;color:#222;letter-spacing:0.528px;left:497.40px;-webkit-text-stroke:0.2px #222;">(UTC +06) Омск</div>
<div class="t" style="top:365.57px;font-size:12.5px;line-height:15px;color:#222;letter-spacing:0.509px;left:675.50px;-webkit-text-stroke:0.2px #222;">Карта</div>
<div class="t" style="top:399.77px;font-size:12.5px;line-height:15px;color:#222;letter-spacing:-0.153px;left:185.90px;-webkit-text-stroke:0.2px #222;">Доступные языки в системе:</div>
<div class="t" style="top:399.77px;font-size:12.5px;line-height:15px;color:#222;letter-spacing:-0.002px;left:357.00px;-webkit-text-stroke:0.2px #222;">English, Русский</div>
<div class="t" style="top:431.57px;font-size:12.5px;line-height:15px;color:#222;letter-spacing:-0.537px;left:185.90px;-webkit-text-stroke:0.2px #222;">Язык:</div>
<div class="t" style="top:431.57px;font-size:12.5px;line-height:15px;color:#222;letter-spacing:-0.169px;left:229.50px;-webkit-text-stroke:0.2px #222;">По умолчанию (Русский)</div>
<div class="t" style="top:474.47px;font-size:12.5px;line-height:15px;color:#222;letter-spacing:0.010px;left:186.00px;-webkit-text-stroke:0.2px #222;">Установка системы:</div>
<div class="t" style="top:474.47px;font-size:12.5px;line-height:15px;color:#222;letter-spacing:-0.218px;left:312.70px;-webkit-text-stroke:0.2px #222;">...копирование файлов ядра...</div>
<div class="t" style="top:514.67px;font-size:12.5px;line-height:15px;color:#222;letter-spacing:0.135px;left:186.00px;-webkit-text-stroke:0.2px #222;">Установка ПО:</div>
<div class="t" style="top:514.67px;font-size:12.5px;line-height:15px;color:#222;letter-spacing:0.256px;left:283.30px;-webkit-text-stroke:0.2px #222;">...установка ubm-firefox-2204-1-x86_64...</div>
<div class="t" style="top:557.27px;font-size:12.5px;line-height:15px;color:#222;letter-spacing:-0.293px;left:359.60px;-webkit-text-stroke:0.2px #222;">Отмена</div>
<div class="t" style="top:557.27px;font-size:12.5px;line-height:15px;color:#222;letter-spacing:0.454px;left:462.70px;-webkit-text-stroke:0.2px #222;">Назад</div>
<div class="t" style="top:557.27px;font-size:12.5px;line-height:15px;color:#222;letter-spacing:0.195px;left:563.40px;-webkit-text-stroke:0.2px #222;">Далее</div>
<div class="t" style="top:557.27px;font-size:12.5px;line-height:15px;color:#222;letter-spacing:-0.016px;left:675.90px;-webkit-text-stroke:0.2px #222;">Пропустить настройку</div>
</div>

</body></html>
